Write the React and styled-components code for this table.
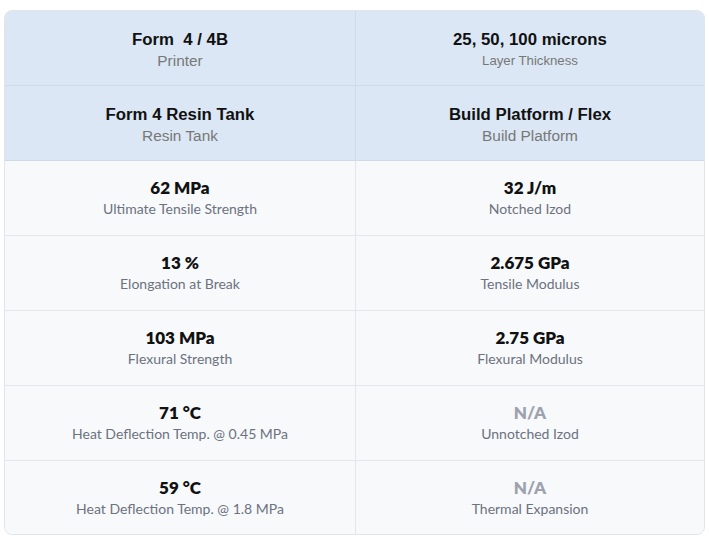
import React from "react";
import styled, { createGlobalStyle } from "styled-components";

const Global = createGlobalStyle`
  html, body { margin: 0; padding: 0; background: #ffffff; }
  body { font-family: "Liberation Sans", Arial, sans-serif; }
`;

const Page = styled.div`
  padding: 10px 4px 0 4px;
`;

const Card = styled.div`
  border: 1px solid #e1e5ea;
  border-radius: 8px;
  overflow: hidden;
  display: grid;
  grid-template-columns: 351px 1fr;
  background: #f8f9fb;
`;

const Cell = styled.div`
  box-sizing: border-box;
  height: ${(p) => (p.$last ? "73px" : "75px")};
  padding-top: ${(p) => (p.$head ? "4px" : "0")};
  display: flex;
  flex-direction: column;
  align-items: center;
  justify-content: center;
  background: ${(p) => (p.$head ? "#dbe7f4" : "#f8f9fb")};
  border-right: ${(p) => (p.$left ? "1px solid " + (p.$head ? "#cfdbea" : "#e3e6ea") : "none")};
  border-bottom: ${(p) => (p.$last ? "none" : "1px solid " + (p.$head ? "#cfdbea" : "#e3e6ea"))};
`;

const HeadTitle = styled.div`
  font-family: "Liberation Sans", Arial, sans-serif;
  font-weight: 700;
  font-size: 16.8px;
  color: #111;
  line-height: 20px;
  white-space: pre;
`;

const HeadSub = styled.div`
  font-family: "Liberation Sans", Arial, sans-serif;
  font-size: ${(p) => (p.$small ? "13.2px" : "15.4px")};
  color: #777;
  line-height: 18px;
  margin-top: 2px;
`;

const Value = styled.div`
  font-family: Lato, "Liberation Sans", sans-serif;
  font-weight: 800;
  font-size: 17px;
  color: ${(p) => (p.$na ? "#9ca3af" : "#111")};
  line-height: 20px;
`;

const Label = styled.div`
  font-family: Lato, "Liberation Sans", sans-serif;
  font-size: 14px;
  color: #6b7280;
  line-height: 18px;
  margin-top: 2px;
`;

const head = [
  [
    { t: "Form  4 / 4B", s: "Printer" },
    { t: "25, 50, 100 microns", s: "Layer Thickness", small: true },
  ],
  [
    { t: "Form 4 Resin Tank", s: "Resin Tank" },
    { t: "Build Platform / Flex", s: "Build Platform" },
  ],
];

const body = [
  [
    { v: "62 MPa", l: "Ultimate Tensile Strength" },
    { v: "32 J/m", l: "Notched Izod" },
  ],
  [
    { v: "13 %", l: "Elongation at Break" },
    { v: "2.675 GPa", l: "Tensile Modulus" },
  ],
  [
    { v: "103 MPa", l: "Flexural Strength" },
    { v: "2.75 GPa", l: "Flexural Modulus" },
  ],
  [
    { v: "71 °C", l: "Heat Deflection Temp. @ 0.45 MPa" },
    { v: "N/A", l: "Unnotched Izod", na: true },
  ],
  [
    { v: "59 °C", l: "Heat Deflection Temp. @ 1.8 MPa" },
    { v: "N/A", l: "Thermal Expansion", na: true },
  ],
];

export default function App() {
  return (
    <Page>
      <Global />
      <Card>
        {head.map((row, ri) =>
          row.map((c, ci) => (
            <Cell key={`h${ri}${ci}`} $head $left={ci === 0}>
              <HeadTitle>{c.t}</HeadTitle>
              <HeadSub $small={c.small}>{c.s}</HeadSub>
            </Cell>
          ))
        )}
        {body.map((row, ri) =>
          row.map((c, ci) => (
            <Cell key={`b${ri}${ci}`} $left={ci === 0} $last={ri === body.length - 1}>
              <Value $na={c.na}>{c.v}</Value>
              <Label>{c.l}</Label>
            </Cell>
          ))
        )}
      </Card>
    </Page>
  );
}
